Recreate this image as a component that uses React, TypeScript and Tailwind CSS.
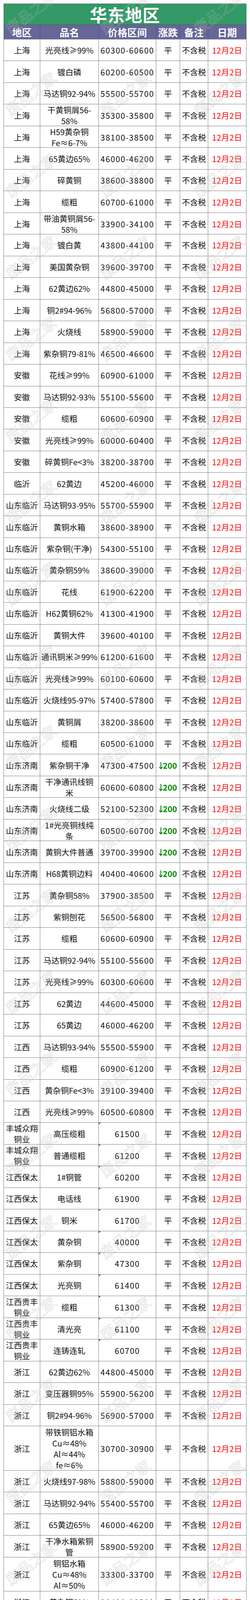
import React from "react"

type Row = [string, string, string, string?, string?]

const COLS = "grid grid-cols-[93px_150px_147px_61px_72px_98px]"

const east: Row[] = [
  ["上海", "光亮线≥99%", "60300-60600"],
  ["上海", "镀白磷", "60200-60500"],
  ["上海", "马达铜92-94%", "55500-55700"],
  ["上海", "干黄铜屑56-\n58%", "35300-35800"],
  ["上海", "H59黄杂铜\nFe≈6-7%", "38100-38500"],
  ["上海", "65黄边65%", "46000-46200"],
  ["上海", "碎黄铜", "38600-38800"],
  ["上海", "缆粗", "60700-61000"],
  ["上海", "带油黄铜屑56-\n58%", "33900-34100"],
  ["上海", "镀白黄", "43800-44100"],
  ["上海", "美国黄杂铜", "39600-39700"],
  ["上海", "62黄边62%", "44800-45000"],
  ["上海", "铜2#94-96%", "56800-57000"],
  ["上海", "火烧线", "58900-59000"],
  ["上海", "紫杂铜79-81%", "46500-46600"],
  ["安徽", "花线≥99%", "60900-61000"],
  ["安徽", "马达铜92-93%", "55100-55600"],
  ["安徽", "缆粗", "60600-60900"],
  ["安徽", "光亮线≥99%", "60000-60400"],
  ["安徽", "碎黄铜Fe<3%", "38200-38700"],
  ["临沂", "62黄边", "45200-46000"],
  ["山东临沂", "马达铜93-95%", "55700-55900"],
  ["山东临沂", "黄铜水箱", "38600-38900"],
  ["山东临沂", "紫杂铜(干净)", "54300-55100"],
  ["山东临沂", "黄杂铜59%", "38600-39000"],
  ["山东临沂", "花线", "61900-62200"],
  ["山东临沂", "H62黄铜62%", "41300-41900"],
  ["山东临沂", "黄铜大件", "39600-40100"],
  ["山东临沂", "通讯铜米≥99%", "61200-61600"],
  ["山东临沂", "光亮线≥99%", "60100-60600"],
  ["山东临沂", "火烧线95-97%", "57400-57800"],
  ["山东临沂", "黄铜屑", "38200-38600"],
  ["山东临沂", "缆粗", "60500-61000"],
  ["山东济南", "紫杂铜干净", "47300-47500", "↓200"],
  ["山东济南", "干净通讯线铜\n米", "60600-60800", "↓200"],
  ["山东济南", "火烧线二级", "52100-52300", "↓200"],
  ["山东济南", "1#光亮铜线纯\n条", "60500-60700", "↓200"],
  ["山东济南", "黄铜大件普通", "39700-39900", "↓200"],
  ["山东济南", "H68黄铜边料", "40400-40600", "↓200"],
  ["江苏", "黄杂铜58%", "37900-38500"],
  ["江苏", "紫铜刨花", "56500-56800"],
  ["江苏", "缆粗", "60600-60900"],
  ["江苏", "马达铜92-94%", "55100-55600"],
  ["江苏", "光亮线≥99%", "60300-60600"],
  ["江苏", "62黄边", "44600-45000"],
  ["江苏", "65黄边", "46000-46200"],
  ["江西", "马达铜93-94%", "55500-55900"],
  ["江西", "缆粗", "60900-61200"],
  ["江西", "黄杂铜Fe<3%", "39100-39400"],
  ["江西", "光亮线≥99%", "60500-60800"],
  ["丰城众翔\n铜业", "高压缆粗", "61500"],
  ["丰城众翔\n铜业", "普通缆粗", "61200"],
  ["江西保太", "1#铜管", "60200"],
  ["江西保太", "电话线", "61900"],
  ["江西保太", "铜米", "61700"],
  ["江西保太", "黄杂铜", "40000"],
  ["江西保太", "紫杂铜", "47300"],
  ["江西保太", "光亮铜", "61400"],
  ["江西贵丰\n铜业", "缆粗", "61300"],
  ["江西贵丰\n铜业", "清光亮", "61100"],
  ["江西贵丰\n铜业", "连铸连轧", "60700"],
  ["浙江", "62黄边62%", "44800-45000"],
  ["浙江", "变压器铜95%", "55900-56200"],
  ["浙江", "铜2#94-96%", "56900-57000"],
  ["浙江", "带铁铜铝水箱\nCu≈48%\nAl≈44%\nfe≈6%", "30700-30900", "平", "h-[114px]"],
  ["浙江", "火烧线97-98%", "58800-59000"],
  ["浙江", "马达铜92-94%", "55400-55700"],
  ["浙江", "65黄边65%", "46000-46200"],
  ["浙江", "干净水箱紫铜\n管", "58900-59200"],
  ["浙江", "铜铝水箱\nCu≈48%\nAl≈50%", "33300-33700", "平", "h-[87px]"],
  ["浙江", "黄杂铜59%", "38400-38500"],
  ["浙江", "缆粗", "60600-60900"],
  ["浙江", "B30白铜\nCu67%\nNi/Co28%-\n32%", "66800-67800", "↓200", "h-[122px]"],
  ["浙江", "光亮线", "60300-60600"],
  ["福建", "马达铜91-93%", "55600-55700"],
  ["福建", "光亮线≥99%", "60500-60800"],
  ["福建", "黄杂铜59%", "38300-38600"],
  ["福建", "缆粗", "60700-61000"],
]

const southwest: Row[] = [
  ["云南", "2#铜", "56300-56700"],
  ["云南", "1#铜≥99%", "59600-60000"],
  ["云南", "碎黄铜", "38900-39100"],
  ["云南", "缆粗", "60500-60800"],
  ["云南", "光亮线", "60200-60500"],
  ["云南", "黄杂铜", "38000-38200"],
  ["云南", "马达铜", "55700-55900"],
  ["四川", "缆粗", "60400-60700"],
  ["四川", "马达铜92-93%", "55400-55600"],
  ["四川", "碎紫铜90%左\n右", "55400-55600"],
  ["四川", "黄杂铜59%", "37900-38200"],
  ["四川", "光亮线≥99%", "60100-60400"],
  ["四川", "碎黄铜Fe<3%", "38600-39000"],
  ["四川成都", "干净通讯线铜\n米", "60400-60600", "↓200"],
  ["四川成都", "火烧线二级", "51800-52000", "↓200"],
  ["四川成都", "特紫铜", "59000-59200", "↓200"],
  ["四川成都", "电机线一级", "53600-53800", "↓200"],
  ["四川成都", "黄铜大件普通", "39700-39900", "↓200"],
  ["四川成都", "黄铜水箱常规", "36800-37000", "↓200"],
  ["贵州", "带铁铜铝水箱\nCu≈45%\nAl≈43%\nFE≈10%", "31800-32200", "平", "h-[116px]"],
  ["贵州", "缆粗", "60400-60700"],
  ["贵州", "漆包线91-92%", "55500-55800"],
  ["贵州", "光亮线≥99%", "60000-60400"],
  ["贵州", "马达铜92-94%", "55400-55800"],
  ["贵州", "黄杂铜58%", "38400-38600"],
  ["重庆", "黄杂铜58%", "37600-37900"],
  ["重庆", "光亮线≥99%", "59900-60300"],
  ["重庆", "漆包线≥90%", "55000-55300"],
  ["重庆", "缆粗", "60300-60600"],
  ["重庆", "铜铝水箱\nCu≈48%\nAl≈50%", "34100-34400", "平", "h-[87px]"],
  ["重庆", "电机线92-93%", "54500-54800"],
]

const central: Row[] = [
  ["河南", "缆粗", "60700-61000"],
  ["河南", "马达铜92-93%", "55900-56000"],
  ["河南长葛", "光亮线≥99%", "60400-60700"],
  ["河南长葛", "火烧线95-96%", "57200-57500"],
  ["河南长葛", "碎紫铜90%左\n右", "55500-55800"],
  ["河南长葛", "黄杂铜59%", "38200-38300"],
  ["河南新昌", "缆粗", "61300", "↑200"],
  ["河南新昌\n铜业", "普光亮", "61000", "↑200"],
  ["湖北", "马达铜85-87%", "55500-55800"],
  ["湖北", "光亮线", "60500-60800"],
  ["湖北", "花线", "61500-62000"],
  ["湖北", "黄铜水箱", "36200-36400"],
  ["湖北", "H63黄铜", "45500-45700"],
  ["湖北", "黄铜大件", "38900-39100"],
  ["湖北", "碎黄铜", "38600-38700"],
  ["湖南", "漆包线", "55600-55900"],
  ["湖南", "缆粗", "60800-61100"],
  ["汨罗", "光亮线≥99%", "60500-60800"],
  ["汨罗", "镀白紫铜板", "59900-60400"],
  ["汨罗", "紫铜屑", "44500-44700"],
  ["汨罗", "马达铜91-93%", "55500-55800"],
  ["汨罗", "黄杂铜Fe<3%", "37800-37900"],
  ["汨罗", "空调铜管", "59700-60200"],
  ["汨罗", "碎黄铜", "38500-38800"],
  ["湖南金龙\n铜业", "光亮铜", "61200"],
]

const cell =
  "relative flex items-center justify-center text-center border-r border-[#7f7f7f] whitespace-pre leading-[28px]"

function Change({ value }: { value: string }) {
  if (value === "平") return <>平</>
  const down = value.startsWith("↓")
  return (
    <span className={`flex items-center font-bold ${down ? "text-[#008a00]" : "text-[#ff0000]"}`}>
      <span className="inline-flex w-[10px] justify-center">{down ? "↓" : "↑"}</span>
      {value.slice(1)}
    </span>
  )
}

function Section({ title, rows, first }: { title: string; rows: Row[]; first?: boolean }) {
  return (
    <div>
      <div
        className={`h-[54px] bg-[#339966] border-r border-[#6f6f6f] flex items-center justify-center text-white text-[44px] font-bold leading-none tracking-[1px] ${first ? "border-t" : ""}`}
      >
        {title}
      </div>
      <div className={`${COLS} h-[37px] bg-[#666699] text-white text-[25px] font-bold leading-none border-t border-[#555]`}>
        {["地区", "品名", "价格区间", "涨跌", "备注", "日期"].map((h) => (
          <div key={h} className="flex items-center justify-center border-r border-[#4f4f6f]">
            {h}
          </div>
        ))}
      </div>
      {rows.map((row, i) => {
        const [region, name, price, change = "平", height] = row
        const single = !price.includes("-")
        return (
          <div key={i} className={`${COLS} ${height ?? "h-[55.47px]"} border-t border-[#7f7f7f]`}>
            <div className={cell}>{region}</div>
            <div className={cell}>{name}</div>
            <div className={`${cell} tracking-[1.5px]`}>
              {single && (
                <span className="absolute left-0 top-0 w-0 h-0 border-t-[5px] border-r-[5px] border-t-[#1e8c45] border-r-transparent" />
              )}
              {price}
            </div>
            <div className={cell}>
              <Change value={change} />
            </div>
            <div className={cell}>不含税</div>
            <div className={`${cell} text-[#ff0000] tracking-[0.5px]`}>12月2日</div>
          </div>
        )
      })}
    </div>
  )
}

// faint diagonal "废品之家" stamps laid over the sheet
function Watermarks() {
  const rows = Array.from({ length: 38 }, (_, i) => 30 + i * 209)
  const xs = [78, 320, 560]
  return (
    <div className="pointer-events-none absolute inset-0">
      {rows.map((y) =>
        xs.map((x) => (
          <span
            key={`${x}-${y}`}
            className="absolute -translate-x-1/2 -translate-y-1/2 rotate-[-38deg] whitespace-nowrap text-[38px] leading-none text-transparent [-webkit-text-stroke:1px_rgba(185,185,185,0.55)]"
            style={{ left: x, top: y }}
          >
            废品之家
          </span>
        ))
      )}
    </div>
  )
}

export default function App() {
  return (
    <div className="relative w-[640px] h-[7974px] overflow-hidden bg-white font-['Noto_Sans_CJK_SC','Noto_Sans',sans-serif] text-[20.5px] text-[#111]">
      <div className="ml-[9px] mt-[9px] w-[622px] border-l border-b border-[#7f7f7f]">
        <Section title="华东地区" rows={east} first />
        <Section title="西南地区" rows={southwest} />
        <Section title="华中地区" rows={central} />
      </div>
      <Watermarks />
    </div>
  )
}
